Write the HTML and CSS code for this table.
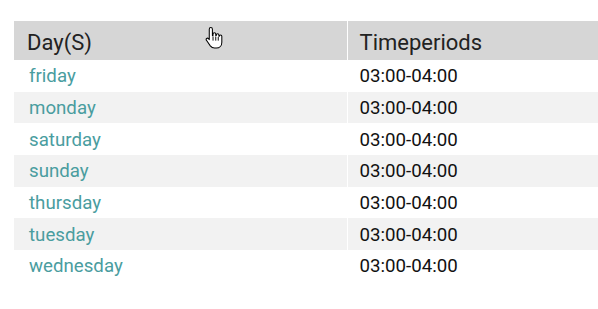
FILE: index.html
```html
<!DOCTYPE html>
<html>
<head>
<meta charset="utf-8">
<link rel="stylesheet" href="styles.css">
</head>
<body>
<div class="wrap">
  <table class="tbl">
    <thead>
      <tr><th class="c1">Day(S)</th><th class="c2">Timeperiods</th></tr>
    </thead>
    <tbody>
      <tr><td class="day">friday</td><td>03:00-04:00</td></tr>
      <tr><td class="day">monday</td><td>03:00-04:00</td></tr>
      <tr><td class="day">saturday</td><td>03:00-04:00</td></tr>
      <tr><td class="day">sunday</td><td>03:00-04:00</td></tr>
      <tr><td class="day">thursday</td><td>03:00-04:00</td></tr>
      <tr><td class="day">tuesday</td><td>03:00-04:00</td></tr>
      <tr><td class="day">wednesday</td><td>03:00-04:00</td></tr>
    </tbody>
  </table>
  <svg class="cursor" width="19" height="23" viewBox="0 0 18 22">
    <path d="M5.5 1.5c.8 0 1.5.7 1.5 1.5v6.2l.6-.1V7.6c0-.7.6-1.2 1.3-1.2s1.3.5 1.3 1.2v1.5h.5V8.6c0-.7.6-1.2 1.3-1.2s1.2.5 1.2 1.2v1.2h.4c0-.7.6-1.1 1.2-1.1.7 0 1.2.5 1.2 1.2v5.6c0 3.2-2.2 5.6-5.2 5.6H9c-1.8 0-3-.8-4-2.1L1.3 13.7c-.5-.6-.4-1.4.2-1.8.6-.4 1.300-.3 1.8.2L4 13V3c0-.8.7-1.5 1.5-1.5z" fill="#fff" stroke="#000" stroke-width="1" stroke-linejoin="round"/>
    <path d="M7.6 10v4M10.2 10v4M12.6 10.5v3.5" stroke="#000" stroke-width="0.9" fill="none"/>
  </svg>
</div>
</body>
</html>
```
FILE: styles.css
```css
html, body { margin: 0; padding: 0; background: #fff; }
.wrap {
  position: relative;
  padding: 21px 0 0 14px;
  font-family: Roboto, "Liberation Sans", sans-serif;
}
.tbl {
  border-collapse: collapse;
  width: 590px;
  table-layout: fixed;
}
.tbl th {
  background: #d6d6d6;
  color: #222;
  font-weight: 400;
  font-size: 22px;
  text-align: left;
  height: 39px;
  padding: 4px 0 0 13px;
  box-sizing: border-box;
}
.tbl th.c1 { width: 333px; border-right: 1px solid #fff; }
.tbl th.c2 { padding-left: 12px; }
.tbl td {
  font-size: 18.7px;
  color: #111;
  height: 31.67px;
  padding: 1px 0 0 12px;
  box-sizing: border-box;
}
.tbl td.day { color: #4a9d9f; padding-left: 15px; border-right: 1px solid #fff; }
.tbl tbody tr:nth-child(even) td { background: #f2f2f2; }
.cursor { position: absolute; left: 205px; top: 26px; }
```
